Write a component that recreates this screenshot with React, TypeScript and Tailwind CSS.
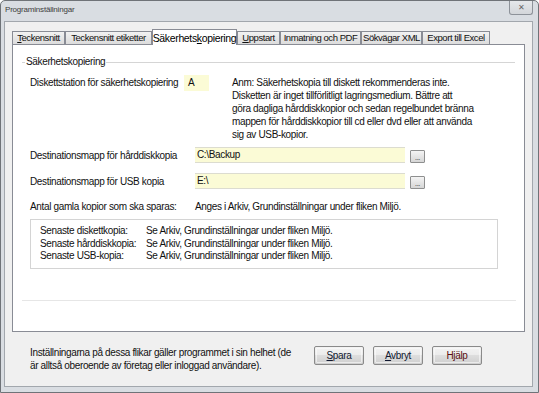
import { ReactNode } from "react";

const font = { fontFamily: '"Liberation Sans", Arial, sans-serif' };

function Tab({ children, active, w }: { children: ReactNode; active?: boolean; w: string }) {
  if (active) {
    return (
      <div className={`relative z-10 -mb-px flex h-[16px] ${w} items-start justify-center whitespace-nowrap border border-b-0 border-[#898c95] bg-white pt-[1px] text-[10.5px] text-black`}>
        {children}
      </div>
    );
  }
  return (
    <div className={`flex h-[13px] ${w} items-center justify-center overflow-hidden whitespace-nowrap border border-b-0 border-[#898c95] bg-gradient-to-b from-[#f2f2f2] to-[#dcdcdc] text-[9.5px] leading-none tracking-[-0.45px] text-[#111]`}>
      {children}
    </div>
  );
}

function Browse() {
  return (
    <div className="ml-[5px] mt-[3px] flex h-[13px] w-[15px] items-end justify-center rounded-[1px] border border-[#8e8f8f] bg-gradient-to-b from-[#f4f4f4] to-[#d6d6d6] pb-[1px] text-[7px] leading-none text-[#222]">
      ...
    </div>
  );
}

function Btn({ children, red }: { children: ReactNode; red?: boolean }) {
  return (
    <div className="h-[19px] w-[50px] rounded-[2px] border border-[#8a8a8a] bg-[linear-gradient(#f3f3f3_0%,#ebebeb_50%,#dddddd_50%,#cfcfcf_100%)] p-px">
      <div className={`flex h-full items-center justify-center rounded-[1px] border border-[#fbfbfb]/60 text-[10px] ${red ? "text-[#5b1010]" : "text-[#101830]"}`}>
        {children}
      </div>
    </div>
  );
}

export default function App() {
  return (
    <div style={font} className="h-[393px] w-[539px] bg-white">
      <div className="flex h-[393px] w-[539px] flex-col rounded-t-[5px] border border-[#6f7378] bg-[#d9dde2] tracking-[-0.35px] text-[#111]">
        <div className="flex h-[20px] items-start justify-between">
          <div className="pl-[4px] pt-[3px] text-[8px] tracking-[-0.2px] text-[#404040]">Programinställningar</div>
          <div className="mr-[5px] flex h-[14px] w-[24px] items-center justify-center rounded-b-[3px] border border-t-0 border-[#8d9299] bg-gradient-to-b from-[#e6e8eb] to-[#d3d6da] text-[8px] text-[#666]">
            ✕
          </div>
        </div>
        <div className="mb-[5px] ml-[3px] mr-[5px] flex flex-1 flex-col border border-[#a2a7ad] bg-[#f0f0f0] pl-[7px] pr-[7px] pt-[6px]">
          <div className="flex h-[16px] items-end">
            <Tab w="w-[53px]"><span><u>T</u>eckensnitt</span></Tab>
            <Tab w="w-[87px]">Teckensnitt etiketter</Tab>
            <Tab w="w-[85px]" active><span>Säkerhets<u>k</u>opiering</span></Tab>
            <Tab w="w-[43px]"><span><u>U</u>ppstart</span></Tab>
            <Tab w="w-[81px]">Inmatning och PDF</Tab>
            <Tab w="w-[61px]">Sökvägar XML</Tab>
            <Tab w="w-[68px]">Export till Excel</Tab>
          </div>
          <div className="h-[288px] border border-[#898c95] bg-white pl-[9px] pr-[9px] text-[10px]">
            <div className="mt-[11px] flex items-center">
              <div className="h-px w-[3px] bg-[#d5d5d5]" />
              <div className="px-[1px] leading-[12px]">Säkerhetskopiering</div>
              <div className="h-px flex-1 bg-[#d5d5d5]" />
            </div>
            <div className="ml-[8px] mt-[7px] flex">
              <div className="w-[154px] pt-[1px] leading-[13px]">Diskettstation för säkerhetskopiering</div>
              <div className="h-[16px] w-[25px] bg-[#fbfbd6] pl-[4px] pt-[2px] leading-[12px]">A</div>
              <div className="ml-[23px] pt-[1px] leading-[13px]">
                <div>Anm: Säkerhetskopia till diskett rekommenderas inte.</div>
                <div>Disketten är inget tillförlitligt lagringsmedium. Bättre att</div>
                <div>göra dagliga hårddiskkopior och sedan regelbundet bränna</div>
                <div>mappen för hårddiskkopior till cd eller dvd eller att använda</div>
                <div>sig av USB-kopior.</div>
              </div>
            </div>
            <div className="ml-[8px] mt-[6px] flex">
              <div className="w-[165px] pt-[2px] leading-[13px]">Destinationsmapp för hårddiskkopia</div>
              <div className="h-[16px] w-[210px] border-y border-[#dcdcd0] bg-[#fbfbd6] pl-[2px] leading-[14px]">C:\Backup</div>
              <Browse />
            </div>
            <div className="ml-[8px] mt-[10px] flex">
              <div className="w-[165px] pt-[2px] leading-[13px]">Destinationsmapp för USB kopia</div>
              <div className="h-[16px] w-[210px] border-y border-[#dcdcd0] bg-[#fbfbd6] pl-[2px] leading-[14px]">E:\</div>
              <Browse />
            </div>
            <div className="ml-[8px] mt-[11px] flex leading-[13px]">
              <div className="w-[165px]">Antal gamla kopior som ska sparas:</div>
              <div>Anges i Arkiv, Grundinställningar under fliken Miljö.</div>
            </div>
            <div className="ml-[8px] mt-[6px] h-[50px] w-[468px] border border-[#d4d4d4] pl-[9px] pt-[5px] leading-[12.5px]">
              <div className="flex"><div className="w-[106px]">Senaste diskettkopia:</div><div>Se Arkiv, Grundinställningar under fliken Miljö.</div></div>
              <div className="flex"><div className="w-[106px]">Senaste hårddiskkopia:</div><div>Se Arkiv, Grundinställningar under fliken Miljö.</div></div>
              <div className="flex"><div className="w-[106px]">Senaste USB-kopia:</div><div>Se Arkiv, Grundinställningar under fliken Miljö.</div></div>
            </div>
            <div className="mr-[-1px] mt-[31px] h-px bg-[#e6e6e6]" />
          </div>
          <div className="flex pl-[18px] pt-[14px] text-[10px]">
            <div className="w-[284px] leading-[13px]">
              <div className="whitespace-nowrap">Inställningarna på dessa flikar gäller programmet i sin helhet (de</div>
              <div>är alltså oberoende av företag eller inloggad användare).</div>
            </div>
            <div className="flex gap-[9px] pt-[0px]">
              <Btn><span><u>S</u>para</span></Btn>
              <Btn><span><u>A</u>vbryt</span></Btn>
              <Btn red>Hjälp</Btn>
            </div>
          </div>
        </div>
      </div>
    </div>
  );
}
